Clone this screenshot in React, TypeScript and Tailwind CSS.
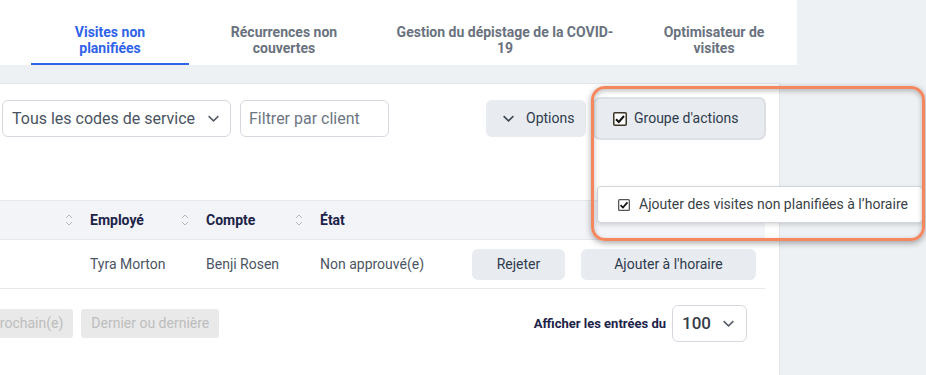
import React from "react";

function Chevron({ className = "" }: { className?: string }) {
  return (
    <svg viewBox="0 0 12 8" className={className} fill="none" stroke="currentColor" strokeWidth="1.4">
      <path d="M1.5 1.8 6 6.2l4.5-4.4" />
    </svg>
  );
}

function SortIcon() {
  return (
    <svg viewBox="0 0 8 14" className="w-[8px] h-[14px] text-[#b4b9c1]" fill="none" stroke="currentColor" strokeWidth="1">
      <path d="M1 5 4 2l3 3M1 9l3 3 3-3" />
    </svg>
  );
}

function Check({ size = 14, color = "#2b2b2b" }: { size?: number; color?: string }) {
  return (
    <svg width={size} height={size} viewBox="0 0 14 14">
      <rect x="0.75" y="0.75" width="12.5" height="12.5" rx="1" fill="#fff" stroke={color} strokeWidth="1.5" />
      <path d="M3 7.2 5.8 10 11 4" fill="none" stroke="#111" strokeWidth="2" />
    </svg>
  );
}

const tabs = [
  { label: "Visites non planifiées", w: "w-[158px]", active: true },
  { label: "Récurrences non couvertes", w: "w-[190px]", active: false },
  { label: "Gestion du dépistage de la COVID-19", w: "w-[252px]", active: false },
  { label: "Optimisateur de visites", w: "w-[166px]", active: false },
];

export default function App() {
  return (
    <div className="relative w-[926px] h-[375px] overflow-hidden bg-[#eef1f4] font-['Roboto',sans-serif]">
      {/* Tabs */}
      <div className="flex w-[797px] h-[65px] bg-white pl-[31px]">
        {tabs.map((t) => (
          <div
            key={t.label}
            className={`${t.w} px-[16px] pt-[24px] text-center text-[14px] leading-[16px] font-bold ${
              t.active ? "text-[#2f63e8] border-b-2 border-[#2f63e8]" : "text-[#69727e]"
            }`}
          >
            {t.label}
          </div>
        ))}
      </div>
      <div className="h-[18px]" />

      {/* Panel */}
      <div className="w-[780px] h-[300px] bg-white border-t border-r border-[#e3e6ea] pl-[2px] pr-[13px]">
        <div className="flex items-center h-[43px] mt-[13px]">
          <div className="flex items-center justify-between w-[229px] h-[37px] border border-[#d5d9df] rounded-[6px] pl-[9px] pr-[10px] text-[16px] text-[#4a5361]">
            <span>Tous les codes de service</span>
            <Chevron className="w-[13px] h-[9px] text-[#555d68]" />
          </div>
          <div className="flex items-center w-[149px] h-[37px] ml-[9px] border border-[#d5d9df] rounded-[6px] pl-[8px] text-[16px] text-[#6d7683]">
            Filtrer par client
          </div>
          <div className="ml-auto flex items-center w-[100px] h-[37px] bg-[#e8ebef] rounded-[6px] pl-[16px] text-[14px] text-[#2e3a4d]">
            <Chevron className="w-[13px] h-[9px] text-[#3a4452]" />
            <span className="ml-[11px]">Options</span>
          </div>
          <div className="flex items-center w-[173px] h-[43px] ml-[7px] bg-[#e8ebef] border-2 border-[#dcdfe4] rounded-[7px] pl-[18px] text-[14px] text-[#2e3a4d]">
            <Check size={14} color="#3d3526" />
            <span className="ml-[7px]">Groupe d'actions</span>
          </div>
        </div>

        {/* Table header */}
        <div className="flex items-center w-[765px] h-[40px] mt-[60px] -ml-[2px] bg-[#f3f4f8] border-y border-[#e6e8ec] text-[14px] font-bold text-[#1c2348]">
          <div className="w-[65px]" />
          <SortIcon />
          <div className="w-[91px] pl-[17px] box-content">Employé</div>
          <SortIcon />
          <div className="w-[89px] pl-[17px] box-content">Compte</div>
          <SortIcon />
          <div className="pl-[17px]">État</div>
        </div>

        {/* Row */}
        <div className="flex items-center w-[765px] h-[49px] -ml-[2px] border-b border-[#e6e8ec] pl-[90px] text-[14px] text-[#4b5563]">
          <div className="w-[116px]">Tyra Morton</div>
          <div className="w-[114px]">Benji Rosen</div>
          <div className="w-[152px]">Non approuvé(e)</div>
          <div className="flex items-center justify-center w-[93px] h-[31px] bg-[#e8ebef] rounded-[6px] text-[#2e3a4d]">Rejeter</div>
          <div className="flex items-center justify-center w-[175px] h-[31px] ml-[16px] bg-[#e8ebef] rounded-[6px] text-[#2e3a4d]">
            Ajouter à l'horaire
          </div>
        </div>

        {/* Pagination */}
        <div className="flex items-center h-[37px] mt-[16px]">
          <div className="flex items-center h-[29px] -ml-[21px] px-[10px] bg-[#e9e9e9] rounded-[3px] text-[14px] text-[#bdbdbd]">
            Prochain(e)
          </div>
          <div className="flex items-center h-[29px] ml-[8px] px-[10px] bg-[#e9e9e9] rounded-[3px] text-[14px] text-[#bdbdbd]">
            Dernier ou dernière
          </div>
          <div className="ml-auto mr-[19px] flex items-center">
            <span className="text-[13px] font-bold text-[#1c2348]">Afficher les entrées du</span>
            <div className="flex items-center justify-between w-[75px] h-[37px] ml-[6px] border border-[#d5d9df] rounded-[6px] pl-[9px] pr-[11px]">
              <span className="text-[17px] font-medium text-[#363d49]">100</span>
              <Chevron className="w-[13px] h-[9px] text-[#555d68]" />
            </div>
          </div>
        </div>
      </div>

      {/* Dropdown menu */}
      <div className="absolute left-[597px] top-[186px] flex items-center w-[326px] h-[37px] bg-white border border-[#d3d6db] rounded-[4px] shadow-[0_2px_4px_rgba(0,0,0,0.15)] pl-[20px] text-[14px] text-[#3a3f47]">
        <Check size={12} color="#555" />
        <span className="ml-[9px]">Ajouter des visites non planifiées à l’horaire</span>
      </div>

      {/* Highlight */}
      <div className="absolute left-[591px] top-[86px] w-[334px] h-[155px] border-[3px] border-[#f5875f] rounded-[14px] shadow-[0_2px_6px_rgba(0,0,0,0.35),inset_0_2px_5px_rgba(0,0,0,0.25)]" />
    </div>
  );
}
